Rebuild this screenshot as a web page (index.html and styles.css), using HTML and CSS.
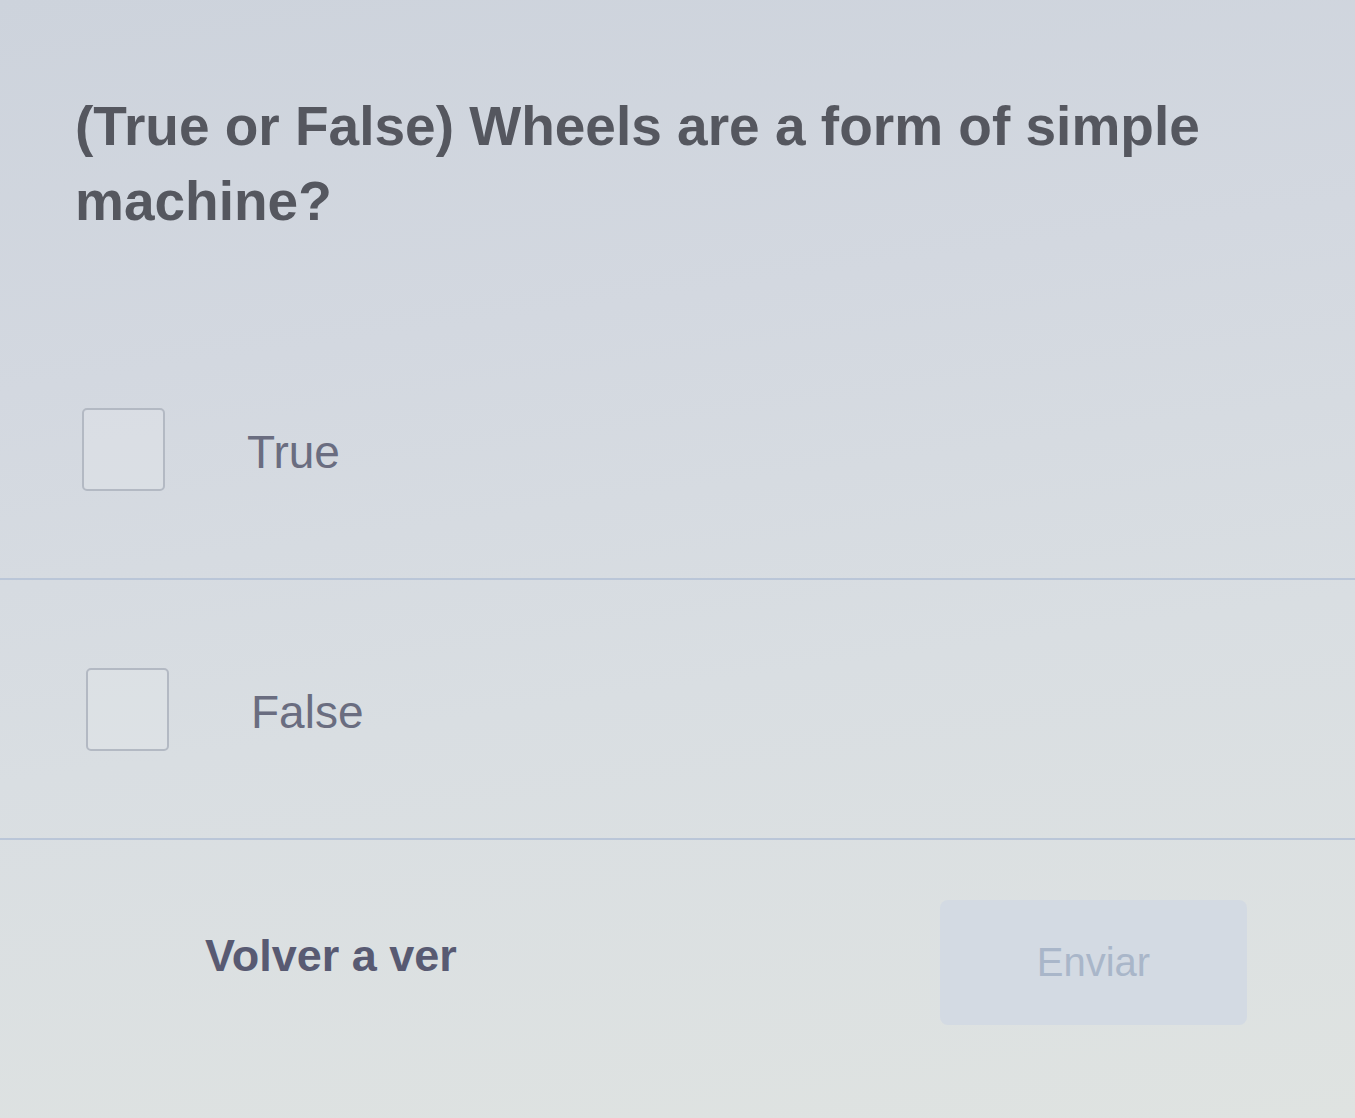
FILE: index.html
```html
<!DOCTYPE html>
<html lang="en">
<head>
<meta charset="utf-8">
<title>Quiz</title>
<link rel="stylesheet" href="styles.css">
</head>
<body>
<main class="quiz">
  <h1 class="question">(True or False) Wheels are a form of simple machine?</h1>
  <ul class="options">
    <li class="option">
      <span class="checkbox"></span>
      <span class="label label-true">True</span>
    </li>
    <li class="option option-second">
      <span class="checkbox"></span>
      <span class="label">False</span>
    </li>
  </ul>
  <div class="actions">
    <button class="btn-review" type="button">Volver a ver</button>
    <button class="btn-submit" type="button" disabled>Enviar</button>
  </div>
</main>
</body>
</html>
```

FILE: styles.css
```css
html, body {
  margin: 0;
  padding: 0;
  height: 100%;
}

body {
  background: linear-gradient(172deg, #cdd3dc 0%, #d3d8e0 30%, #d9dee2 60%, #dfe3e1 100%);
  font-family: "Liberation Sans", Arial, sans-serif;
  overflow: hidden;
}

.quiz {
  min-height: 1118px;
}

.question {
  margin: 0;
  padding: 89px 40px 0 75px;
  font-size: 55px;
  font-weight: 700;
  line-height: 75px;
  color: #55575f;
}

.options {
  list-style: none;
  margin: 81px 0 0 0;
  padding: 0;
}

.option {
  display: flex;
  align-items: center;
  gap: 82px;
  height: 258px;
  padding-left: 82px;
  border-bottom: 2px solid #bac6d8;
}

.option-second {
  padding-left: 86px;
}

.checkbox {
  width: 79px;
  height: 79px;
  border: 2px solid #b3b9c3;
  border-radius: 5px;
  background: rgba(230, 233, 236, 0.35);
  flex: none;
}

.label {
  font-size: 46px;
  color: #6a6d80;
  padding-top: 6px;
}

.actions {
  display: flex;
  align-items: center;
  justify-content: space-between;
  padding: 60px 108px 0 205px;
}

.btn-review {
  border: none;
  background: none;
  padding: 0;
  font-family: "Liberation Sans", Arial, sans-serif;
  font-size: 45px;
  font-weight: 700;
  color: #585a72;
  margin-top: -14px;
  cursor: pointer;
}

.btn-submit {
  width: 307px;
  height: 125px;
  border: none;
  border-radius: 8px;
  background: #d3dae3;
  font-family: "Liberation Sans", Arial, sans-serif;
  font-size: 40px;
  color: #a9b6c9;
  padding: 0;
}
```
